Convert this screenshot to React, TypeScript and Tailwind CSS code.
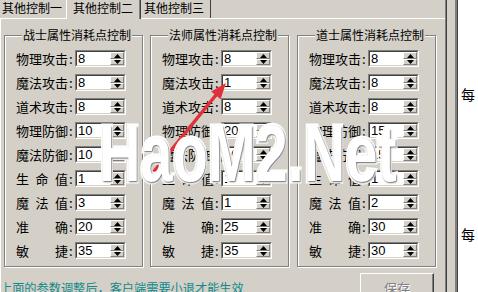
import React from 'react';

const cjk = "font-['Noto_Sans_CJK_SC','Noto_Sans',sans-serif]";

const labels = ['物理攻击', '魔法攻击', '道术攻击', '物理防御', '魔法防御', '生命值', '魔法值', '准确', '敏捷'];

const groups = [
  { title: '战士属性消耗点控制', values: ['8', '8', '8', '10', '10', '1', '3', '20', '35'], ml: 'ml-[3px]' },
  { title: '法师属性消耗点控制', values: ['8', '1', '8', '20', '10', '1', '1', '25', '35'], ml: 'ml-[7px]' },
  { title: '道士属性消耗点控制', values: ['8', '8', '8', '15', '15', '1', '2', '30', '30'], ml: 'ml-[8px]' },
];

function Arrow({ up }: { up?: boolean }) {
  return (
    <svg width="7" height="4" viewBox="0 0 7 4" className="block">
      {up ? <path d="M3.5 0 L7 4 L0 4 Z" fill="#000" /> : <path d="M0 0 L7 0 L3.5 4 Z" fill="#000" />}
    </svg>
  );
}

function SpinEdit({ value }: { value: string }) {
  return (
    <div className="w-[51px] h-[17px] border-t border-l border-t-[#808080] border-l-[#808080] border-r border-b border-r-white border-b-white">
      <div className="h-full flex bg-white border-t border-l border-t-[#404040] border-l-[#404040] border-r border-b border-r-[#d4d0c8] border-b-[#d4d0c8]">
        <span className="flex-1 pl-[1px] text-[13px] leading-[13px] font-['Liberation_Sans',sans-serif] text-black">{value}</span>
        <div className="w-[14px] flex flex-col">
          <div className="h-[7px] flex items-center justify-center bg-[#d4d0c8] border-t border-l border-t-white border-l-white border-r border-b border-r-[#808080] border-b-[#808080]">
            <Arrow up />
          </div>
          <div className="h-[6px] flex items-center justify-center bg-[#d4d0c8] border-t border-l border-t-white border-l-white border-r border-b border-r-[#808080] border-b-[#808080]">
            <Arrow />
          </div>
        </div>
      </div>
    </div>
  );
}

function Label({ text }: { text: string }) {
  return (
    <div className="flex items-center text-[13px] leading-[15px] text-black">
      <div className="w-[52px] flex justify-between">
        {text.split('').map((c, i) => (
          <span key={i}>{c}</span>
        ))}
      </div>
      <span className="w-[7px] pl-[1px]">:</span>
    </div>
  );
}

function Group({ title, values, ml }: { title: string; values: string[]; ml: string }) {
  return (
    <fieldset
      className={`${ml} mt-[8px] w-[139px] border border-[#808080] shadow-[inset_1px_1px_0_#fff,1px_1px_0_#fff] pl-[11px] pt-[7px] pb-[7px]`}
    >
      <legend className="ml-[6px] px-[1px] bg-[#d4d0c8] text-[12px] leading-[16px] text-black">{title}</legend>
      <div className="flex flex-col gap-[7px]">
        {labels.map((l, i) => (
          <div key={l} className="h-[17px] flex items-center">
            <Label text={l} />
            <SpinEdit value={values[i]} />
          </div>
        ))}
      </div>
    </fieldset>
  );
}

export default function App() {
  return (
    <div className={`w-[478px] h-[292px] overflow-hidden bg-[#d4d0c8] relative flex ${cjk}`}>
      {/* Tab control */}
      <div className="w-[447px] h-full flex flex-col border-r border-r-[#404040] shadow-[inset_-1px_0_0_#808080]">
        <div className="h-[18px] flex items-end text-[12px] leading-[16px] text-black">
          <div className="w-[66px] h-[18px] pl-[2px]">其他控制一</div>
          <div className="relative z-10 w-[75px] h-[19px] -mb-[1px] bg-[#d4d0c8] border-l border-l-white border-r border-r-[#404040] shadow-[inset_-1px_0_0_#808080] pl-[6px]">
            其他控制二
          </div>
          <div className="w-[70px] h-[18px] pl-[3px] border-r border-r-[#404040]">其他控制三</div>
        </div>
        <div className="flex-1 border-t border-t-white border-l border-l-white mr-[1px]">
          <div className="flex">
            {groups.map((g) => (
              <Group key={g.title} {...g} />
            ))}
          </div>
          <div className="flex mt-[6px]">
            <span className="mt-[7px] -ml-[1px] text-[12.2px] leading-[17px] text-[#0f8a8a] whitespace-nowrap">
              上面的参数调整后，客户端需要小退才能生效
            </span>
            <div className="ml-auto mr-[11px] w-[74px] h-[24px] flex justify-center pt-[6px] border-t border-l border-t-white border-l-white border-r border-b border-r-[#404040] border-b-[#404040] shadow-[inset_-1px_-1px_0_#808080]">
              <span className="text-[13px] leading-[15px] text-[#808080] [text-shadow:1px_1px_0_#fff]">保存</span>
            </div>
          </div>
        </div>
      </div>

      {/* Right side list */}
      <div className="ml-[8px] flex-1 h-full bg-white border-l-2 border-l-[#808080] shadow-[inset_1px_0_0_#404040] flex flex-col pl-[4px] pt-[86px] gap-[124px] text-[14px] leading-[16px] text-black">
        <span>每</span>
        <span>每</span>
      </div>

      {/* Red arrow annotation */}
      <svg className="absolute left-0 top-0 pointer-events-none" width="478" height="292" viewBox="0 0 478 292">
        <line x1="147" y1="180" x2="216" y2="95" stroke="#e0303a" strokeWidth="3.5" strokeLinecap="round" />
        <path d="M226 83 L220.6 99.2 L211.2 91.6 Z" fill="#e0303a" />
      </svg>

      {/* Watermark */}
      <div className="absolute left-[99px] top-[114px] pointer-events-none origin-left scale-x-[0.72] text-[80px] leading-none font-bold font-['Liberation_Sans',sans-serif] text-white whitespace-nowrap [-webkit-text-stroke:5px_white] [paint-order:stroke_fill] [text-shadow:1px_1px_2px_rgba(0,0,0,0.6)]">
        HaoM2.Net
      </div>
    </div>
  );
}
